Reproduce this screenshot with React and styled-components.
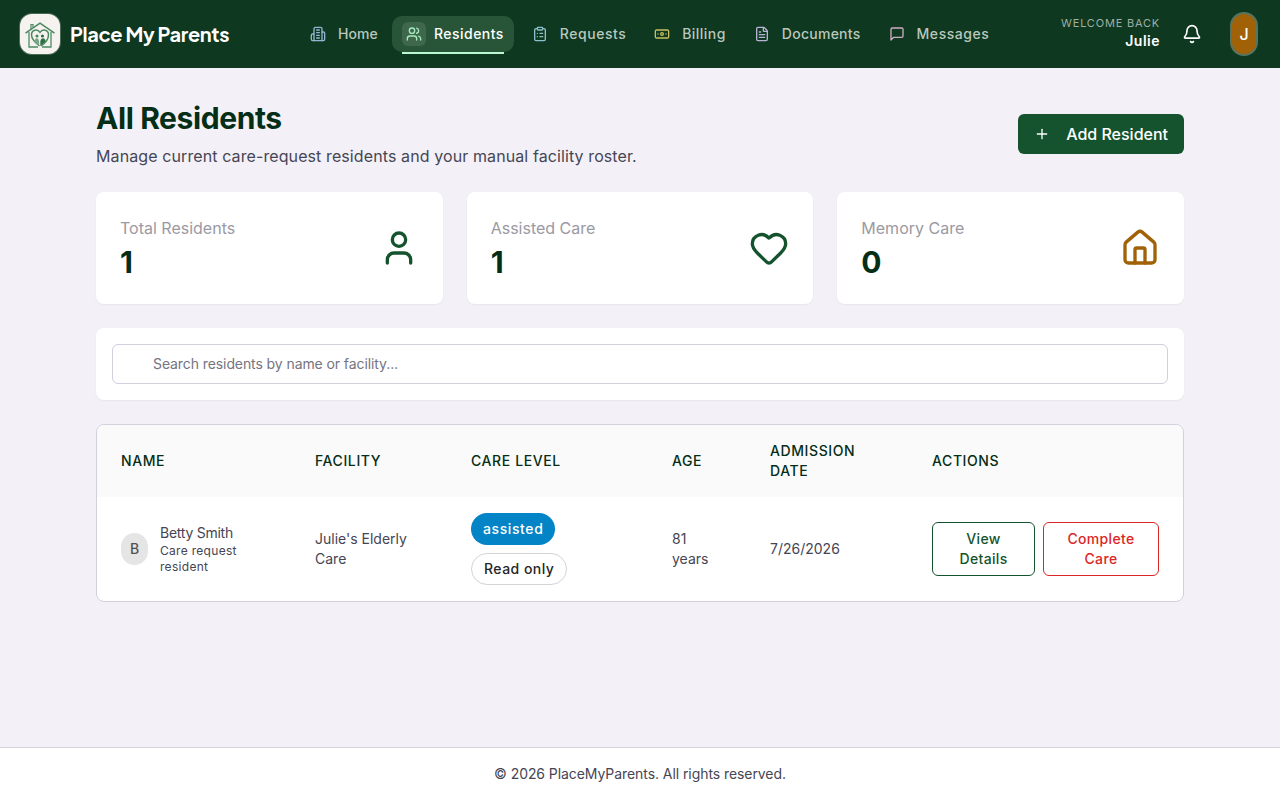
import React from 'react';
import styled, { createGlobalStyle } from 'styled-components';
import { Banknote, Bell, ClipboardList, FileText, House, Plus, User, Users } from 'lucide-react';

const BuildingIcon = () => (
  <svg width="16" height="16" viewBox="0 0 24 24" fill="none" stroke="currentColor" strokeWidth="2" strokeLinecap="round" strokeLinejoin="round">
    <path d="M6 22V4a2 2 0 0 1 2-2h8a2 2 0 0 1 2 2v18Z" />
    <path d="M6 12H4a2 2 0 0 0-2 2v6a2 2 0 0 0 2 2h2" />
    <path d="M18 9h2a2 2 0 0 1 2 2v9a2 2 0 0 1-2 2h-2" />
    <path d="M10 6h4M10 10h4M10 14h4M10 18h4" />
  </svg>
);

const MessageIcon = () => (
  <svg width="16" height="16" viewBox="0 0 24 24" fill="none" stroke="currentColor" strokeWidth="2" strokeLinecap="round" strokeLinejoin="round">
    <path d="M21 15a2 2 0 0 1-2 2H7l-4 4V5a2 2 0 0 1 2-2h14a2 2 0 0 1 2 2z" />
  </svg>
);

const HeartIcon = () => (
  <svg width="40" height="40" viewBox="0 0 24 24" fill="none" stroke="currentColor" strokeWidth="2" strokeLinecap="round" strokeLinejoin="round">
    <path d="M2 9.5a5.5 5.5 0 0 1 9.591-3.676.56.56 0 0 0 .818 0A5.49 5.49 0 0 1 22 9.5c0 2.29-1.5 4-3 5.5l-5.492 5.313a2 2 0 0 1-3 .019L5 15c-1.5-1.5-3-3.2-3-5.5" />
  </svg>
);

const LogoIcon = () => (
  <svg width="40" height="40" viewBox="0 0 40 40" fill="none" stroke="#4b8a61">
    <path d="M5.500 19.200 20 9.200l14.500 10" strokeWidth="1.600" />
    <path d="M11 15v-4.500h2v3" strokeWidth="1.200" />
    <path d="M9 18v15h9M22 33h9V18" strokeWidth="1.300" />
    <path d="M19.500 32c-4-3-8-7-8-11.200 0-5 6-6.300 8.500-2.400 2.500-3.900 8.500-2.600 8.500 2.400 0 4.200-3 8.200-7.500 11.200" strokeWidth="1.500" />
    <circle cx="17" cy="22" r="1.600" fill="#4b8a61" stroke="none" />
    <circle cx="22.500" cy="22" r="1.600" fill="#2f7048" stroke="none" />
    <path d="M14.500 28c0-5 4.600-5 4.600 0v4z" fill="#78a587" stroke="none" />
    <path d="M20.300 32v-4c0-5 5.200-5 5.200-.5z" fill="#2f7048" stroke="none" />
  </svg>
);

const navItems = [
  { label: 'Home', icon: <BuildingIcon />, color: '#93b4d3', spacing: '0.1px' },
  { label: 'Residents', icon: <Users size={16} />, color: '#a7e9bf', spacing: '0.47px', active: true },
  { label: 'Requests', icon: <ClipboardList size={16} />, color: '#8bbfc9', spacing: '0.53px' },
  { label: 'Billing', icon: <Banknote size={16} />, color: '#c9bd62', spacing: '0.45px' },
  { label: 'Documents', icon: <FileText size={16} />, color: '#b9b4d6', spacing: '0.27px' },
  { label: 'Messages', icon: <MessageIcon />, color: '#cfacc4', spacing: '0.55px' },
];

const stats = [
  { label: 'Total Residents', value: 1, icon: <User size={40} />, color: '#14532d' },
  { label: 'Assisted Care', value: 1, icon: <HeartIcon />, color: '#14532d' },
  { label: 'Memory Care', value: 0, icon: <House size={40} />, color: '#a16207' },
];

const App = () => {
  return (
    <Page>
      <GlobalStyle />
      <Header>
        <Brand>
          <Logo><LogoIcon /></Logo>
          <BrandName>Place My Parents</BrandName>
        </Brand>
        <Nav>
          {navItems.map((item) => (
            <NavItem key={item.label} $active={item.active} $spacing={item.spacing}>
              <NavIcon $color={item.color} $active={item.active}>{item.icon}</NavIcon>
              {item.label}
            </NavItem>
          ))}
        </Nav>
        <Account>
          <Welcome>
            <WelcomeLabel>Welcome back</WelcomeLabel>
            <WelcomeName>Julie</WelcomeName>
          </Welcome>
          <BellButton><Bell size={20} /></BellButton>
          <UserAvatar>J</UserAvatar>
        </Account>
      </Header>

      <Main>
        <Heading>
          <div>
            <Title>All Residents</Title>
            <Subtitle>Manage current care-request residents and your manual facility roster.</Subtitle>
          </div>
          <AddButton><Plus size={16} />Add Resident</AddButton>
        </Heading>

        <Stats>
          {stats.map((stat) => (
            <StatCard key={stat.label}>
              <div>
                <StatLabel>{stat.label}</StatLabel>
                <StatValue>{stat.value}</StatValue>
              </div>
              <StatIcon $color={stat.color}>{stat.icon}</StatIcon>
            </StatCard>
          ))}
        </Stats>

        <SearchCard>
          <SearchInput placeholder="Search residents by name or facility..." />
        </SearchCard>

        <TableCard>
          <TableHead>
            <Cell>Name</Cell>
            <Cell>Facility</Cell>
            <Cell>Care Level</Cell>
            <Cell>Age</Cell>
            <Cell>Admission Date</Cell>
            <Cell>Actions</Cell>
          </TableHead>
          <TableRow>
            <Cell>
              <Resident>
                <ResidentAvatar>B</ResidentAvatar>
                <div>
                  <ResidentName>Betty Smith</ResidentName>
                  <ResidentNote>Care request resident</ResidentNote>
                </div>
              </Resident>
            </Cell>
            <Cell>Julie's Elderly Care</Cell>
            <Cell>
              <Badges>
                <Badge $filled>assisted</Badge>
                <Badge>Read only</Badge>
              </Badges>
            </Cell>
            <Cell>81 years</Cell>
            <Cell>7/26/2026</Cell>
            <Cell>
              <Actions>
                <ActionButton $width="103px" $color="#14532d">View Details</ActionButton>
                <ActionButton $width="116px" $color="#dc2626">Complete Care</ActionButton>
              </Actions>
            </Cell>
          </TableRow>
        </TableCard>
      </Main>

      <Footer>© 2026 PlaceMyParents. All rights reserved.</Footer>
    </Page>
  );
};

const GlobalStyle = createGlobalStyle`
  * {
    box-sizing: border-box;
  }

  body {
    margin: 0;
    font-family: Inter, sans-serif;
    font-size: 14px;
    line-height: 20px;
    color: #464554;
  }

  svg {
    display: block;
    flex-shrink: 0;
  }

  p, h1 {
    margin: 0;
  }

  button, input {
    font-family: inherit;
  }
`
const Page = styled.div`
  display: flex;
  flex-direction: column;
  height: 100vh;
  overflow: hidden;
  background: #f3f1f7;
`
const Header = styled.header`
  display: flex;
  align-items: center;
  height: 68px;
  flex-shrink: 0;
  padding: 0 22px 0 20px;
  background: #0e381f;
`
const Brand = styled.div`
  display: flex;
  align-items: center;
  gap: 10px;
  width: 280px;
`
const Logo = styled.div`
  width: 40px;
  height: 40px;
  border-radius: 12px;
  background: #f5f2ef;
  box-shadow: 0 0 0 1px rgba(255, 255, 255, 0.25);
  overflow: hidden;
`
const BrandName = styled.span`
  color: #fff;
  font-family: 'Plus Jakarta Sans', Inter, sans-serif;
  font-size: 20px;
  font-weight: 700;
  line-height: 28px;
  letter-spacing: -0.35px;
  white-space: nowrap;
`
const Nav = styled.nav`
  display: flex;
  gap: 4px;
  margin-left: -4px;
`
const NavItem = styled.a`
  position: relative;
  display: flex;
  align-items: center;
  gap: 8px;
  height: 36px;
  padding: 0 10px;
  border-radius: 10px;
  background: ${({ $active }) => ($active ? '#285538' : 'transparent')};
  color: ${({ $active }) => ($active ? '#fff' : '#b9c7be')};
  font-weight: 500;
  letter-spacing: ${({ $spacing }) => $spacing};

  &::after {
    content: '';
    display: ${({ $active }) => ($active ? 'block' : 'none')};
    position: absolute;
    left: 10px;
    right: 10px;
    bottom: -2px;
    height: 2px;
    background: #bbf7d0;
  }
`
const NavIcon = styled.span`
  display: flex;
  align-items: center;
  justify-content: center;
  width: 24px;
  height: 24px;
  border-radius: 6px;
  background: ${({ $active }) => ($active ? '#3e674c' : 'transparent')};
  color: ${({ $color }) => $color};
`
const Account = styled.div`
  display: flex;
  align-items: center;
  margin-left: auto;
`
const Welcome = styled.div`
  padding-bottom: 2px;
  text-align: right;
`
const WelcomeLabel = styled.p`
  color: #9fafa5;
  font-size: 11px;
  line-height: 16px;
  letter-spacing: 0.8px;
  text-transform: uppercase;
`
const WelcomeName = styled.p`
  color: #fff;
  font-weight: 600;
  letter-spacing: 0.5px;
`
const BellButton = styled.div`
  margin: 0 28px 0 22px;
  color: #fff;
`
const UserAvatar = styled.div`
  display: flex;
  align-items: center;
  justify-content: center;
  width: 28px;
  height: 44px;
  border: 2px solid #567460;
  border-radius: 14px;
  background: #a16207;
  color: #fff;
  font-size: 16px;
  font-weight: 500;
`
const Main = styled.main`
  display: flex;
  flex-direction: column;
  gap: 24px;
  flex: 1;
  width: 1088px;
  margin: 0 auto;
  padding-top: 32px;
`
const Heading = styled.div`
  display: flex;
  align-items: center;
  justify-content: space-between;
  height: 68px;
`
const Title = styled.h1`
  color: #052e16;
  font-size: 30px;
  font-weight: 700;
  line-height: 36px;
  letter-spacing: -0.4px;
`
const Subtitle = styled.p`
  margin-top: 8px;
  font-size: 16px;
  line-height: 24px;
  letter-spacing: 0.1px;
`
const AddButton = styled.button`
  display: flex;
  align-items: center;
  gap: 16px;
  height: 40px;
  padding: 0 16px;
  border: none;
  border-radius: 6px;
  background: #14532d;
  color: #fff;
  font-size: 16px;
  font-weight: 500;
`
const Stats = styled.div`
  display: grid;
  grid-template-columns: repeat(3, 1fr);
  gap: 24px;
`
const StatCard = styled.div`
  display: flex;
  align-items: center;
  justify-content: space-between;
  height: 112px;
  padding: 24px;
  border-radius: 8px;
  background: #fff;
  box-shadow: 0 1px 2px rgba(0, 0, 0, 0.05);
`
const StatLabel = styled.p`
  color: #9b99a3;
  font-size: 16px;
  line-height: 24px;
`
const StatValue = styled.p`
  margin-top: 4px;
  color: #052e16;
  font-size: 30px;
  font-weight: 700;
  line-height: 36px;
`
const StatIcon = styled.div`
  color: ${({ $color }) => $color};
`
const SearchCard = styled.div`
  padding: 16px;
  border-radius: 8px;
  background: #fff;
  box-shadow: 0 1px 2px rgba(0, 0, 0, 0.05);
`
const SearchInput = styled.input`
  display: block;
  width: 100%;
  height: 40px;
  padding: 0 40px 2px;
  border: 1px solid #d2d0df;
  border-radius: 6px;
  background: #fff;
  font-size: 14px;
  letter-spacing: -0.09px;

  &::placeholder {
    color: #757480;
  }
`
const TableCard = styled.div`
  border: 1px solid #d2d0df;
  border-radius: 8px;
  background: #fff;
  overflow: hidden;
`
const TableRow = styled.div`
  display: grid;
  grid-template-columns: 194px 156px 201px 98px 162px 1fr;
  align-items: center;
  height: 104px;
`
const TableHead = styled(TableRow)`
  height: 72px;
  background: #fafafa;
  color: #052e16;
  font-weight: 500;
  letter-spacing: 0.6px;
  text-transform: uppercase;
`
const Cell = styled.div`
  padding: 0 24px;
`
const Resident = styled.div`
  display: flex;
  align-items: center;
  gap: 12px;
`
const ResidentAvatar = styled.div`
  display: flex;
  align-items: center;
  justify-content: center;
  flex-shrink: 0;
  width: 27px;
  height: 32px;
  border-radius: 14px;
  background: #e5e5e5;
  color: #525252;
  font-weight: 500;
`
const ResidentName = styled.p`
  line-height: 20px;
  letter-spacing: -0.25px;
`
const ResidentNote = styled.p`
  font-size: 12px;
  line-height: 16px;
  letter-spacing: 0.3px;
`
const Badges = styled.div`
  display: flex;
  flex-direction: column;
  align-items: flex-start;
  gap: 8px;
`
const Badge = styled.span`
  display: flex;
  align-items: center;
  height: 32px;
  padding: 0 12px;
  border: ${({ $filled }) => ($filled ? 'none' : '1px solid #d4d4d4')};
  border-radius: 16px;
  background: ${({ $filled }) => ($filled ? '#0284c7' : '#fff')};
  color: ${({ $filled }) => ($filled ? '#fff' : '#262626')};
  font-weight: 500;
  letter-spacing: ${({ $filled }) => ($filled ? '0.6px' : '0.46px')};
`
const Actions = styled.div`
  display: flex;
  gap: 8px;
`
const ActionButton = styled.button`
  flex-shrink: 0;
  width: ${({ $width }) => $width};
  height: 54px;
  padding: 6px 16px;
  border: 1px solid ${({ $color }) => $color};
  border-radius: 6px;
  background: #fff;
  color: ${({ $color }) => $color};
  font-size: 14px;
  font-weight: 500;
  line-height: 20px;
  letter-spacing: 0.35px;
`
const Footer = styled.footer`
  height: 53px;
  padding-top: 16px;
  border-top: 1px solid #d4d2dc;
  background: #fff;
  letter-spacing: -0.07px;
  text-align: center;
`

export default App;
